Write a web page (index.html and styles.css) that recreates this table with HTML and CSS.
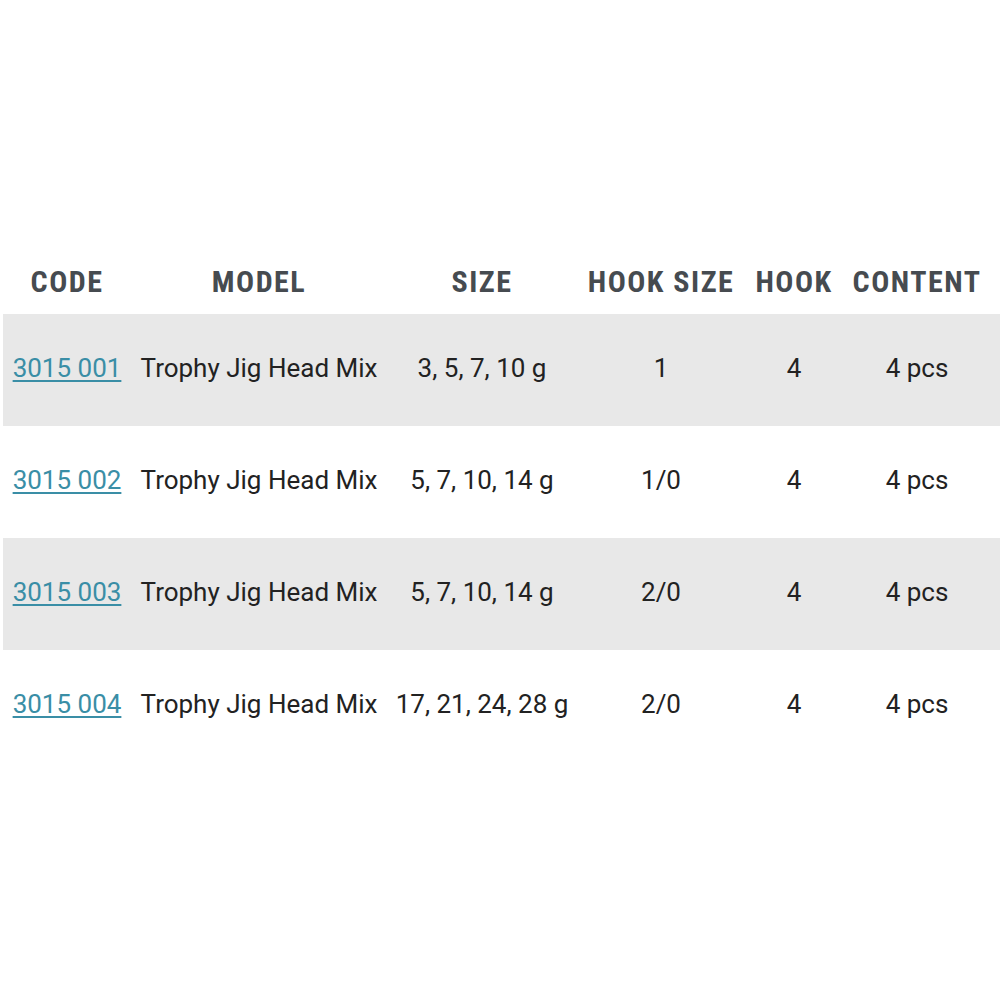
FILE: index.html
```html
<!DOCTYPE html>
<html>
<head>
<meta charset="utf-8">
<link rel="stylesheet" href="styles.css">
</head>
<body>
<table class="spec">
  <colgroup>
    <col class="c-code"><col class="c-model"><col class="c-size"><col class="c-hooksize"><col class="c-hook"><col class="c-content">
  </colgroup>
  <thead>
    <tr>
      <th><span class="hd">CODE</span></th>
      <th><span class="hd">MODEL</span></th>
      <th><span class="hd">SIZE</span></th>
      <th><span class="hd">HOOK SIZE</span></th>
      <th><span class="hd">HOOK</span></th>
      <th class="last"><span class="hd">CONTENT</span></th>
    </tr>
  </thead>
  <tbody>
    <tr class="alt">
      <td><a href="#">3015 001</a></td><td>Trophy Jig Head Mix</td><td>3, 5, 7, 10 g</td><td>1</td><td>4</td><td class="last">4 pcs</td>
    </tr>
    <tr>
      <td><a href="#">3015 002</a></td><td>Trophy Jig Head Mix</td><td>5, 7, 10, 14 g</td><td>1/0</td><td>4</td><td class="last">4 pcs</td>
    </tr>
    <tr class="alt">
      <td><a href="#">3015 003</a></td><td>Trophy Jig Head Mix</td><td>5, 7, 10, 14 g</td><td>2/0</td><td>4</td><td class="last">4 pcs</td>
    </tr>
    <tr>
      <td><a href="#">3015 004</a></td><td>Trophy Jig Head Mix</td><td>17, 21, 24, 28 g</td><td>2/0</td><td>4</td><td class="last">4 pcs</td>
    </tr>
  </tbody>
</table>
</body>
</html>
```
FILE: styles.css
```css
html, body {
  margin: 0;
  padding: 0;
  background: #ffffff;
}
body {
  font-family: Roboto, "Liberation Sans", sans-serif;
  color: #222222;
  padding-top: 249px;
  padding-left: 3px;
}
.spec {
  border-collapse: collapse;
  table-layout: fixed;
  width: 997px;
}
.c-code { width: 128px; }
.c-model { width: 256px; }
.c-size { width: 190px; }
.c-hooksize { width: 168px; }
.c-hook { width: 98px; }
.c-content { width: 157px; }
.spec th {
  height: 64px;
  padding: 0 0 1px 0;
  text-align: center;
  vertical-align: middle;
  font-weight: 700;
  color: #464b50;
  white-space: nowrap;
}
.hd {
  display: inline-block;
  font-size: 30px;
  font-stretch: condensed;
  letter-spacing: 1.5px;
}
.spec td {
  height: 108px;
  padding: 0 0 4px 0;
  text-align: center;
  vertical-align: middle;
  font-size: 26px;
  white-space: nowrap;
}
.spec .last {
  padding-right: 9px;
}
.spec tr.alt td {
  background: #e8e8e8;
}
.spec a {
  color: #3a8ea6;
  text-decoration: underline;
  text-underline-offset: 3px;
}
```
